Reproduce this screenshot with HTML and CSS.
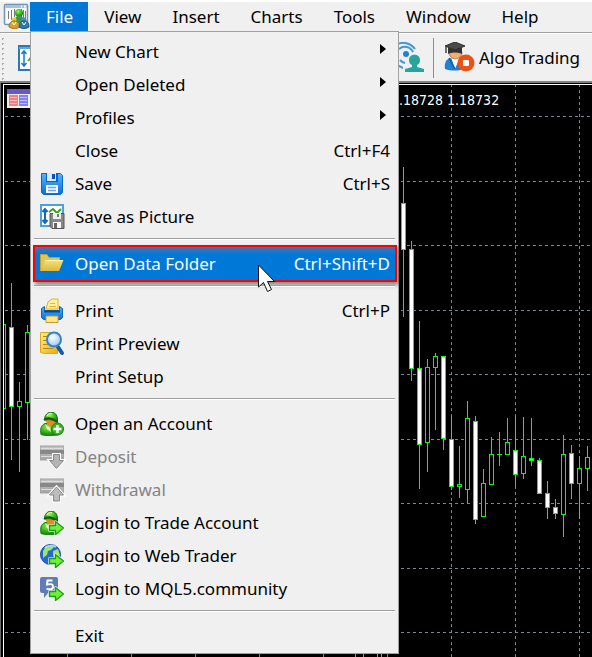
FILE: index.html
```html
<!DOCTYPE html>
<html lang="en">
<head>
<meta charset="utf-8">
<title>Trading terminal</title>
<link rel="stylesheet" href="styles.css">
</head>
<body>
<svg class="defs" aria-hidden="true">
  <defs>
    <linearGradient id="blue" x1="0" y1="0" x2="0" y2="1"><stop offset="0" stop-color="#58b4fa"/><stop offset="1" stop-color="#0870d8"/></linearGradient>
    <linearGradient id="gold" x1="0" y1="0" x2="1" y2="1"><stop offset="0" stop-color="#fff08a"/><stop offset="1" stop-color="#e8ac08"/></linearGradient>
    <linearGradient id="folder" x1="0" y1="0" x2="0" y2="1"><stop offset="0" stop-color="#f4e07c"/><stop offset="1" stop-color="#dcb840"/></linearGradient>
    <radialGradient id="green" cx=".4" cy=".3" r=".7"><stop offset="0" stop-color="#a0f050"/><stop offset=".55" stop-color="#3cb81c"/><stop offset="1" stop-color="#148010"/></radialGradient>
    <radialGradient id="lens" cx=".4" cy=".35" r=".7"><stop offset="0" stop-color="#ffffff"/><stop offset="1" stop-color="#8fc8f4"/></radialGradient>
    <linearGradient id="grey" x1="0" y1="0" x2="0" y2="1"><stop offset="0" stop-color="#c4c4c4"/><stop offset="1" stop-color="#a4a4a4"/></linearGradient>
    <symbol id="arrow" viewBox="0 0 24 24">
      <path d="M9.500 14.500h6v-4l8 6.500-8 6.500v-4h-6z" fill="#5fe02c" stroke="#fff" stroke-width="2.500" stroke-linejoin="round"/>
      <path d="M9.500 14.500h6v-4l8 6.500-8 6.500v-4h-6z" fill="#70f038" stroke="#18a010" stroke-width="1.400" stroke-linejoin="round"/>
    </symbol>
    <symbol id="person" viewBox="0 0 24 24">
      <path d="M1 22.500c-1-6 0-9 4-11h9c4 1 6 5 5 11-5 1.500-14 1.500-18 0z" fill="url(#green)" stroke="#178010"/>
      <path d="M5 8l3 5 4 2 4-4v-4z" fill="#e88820"/>
      <path d="M5 12l5 4 1 4-4-3z" fill="#e8f4d8"/>
      <path d="M4.500 8c0-10 13-11 13 0v3c-3-3-8-4-13-3z" fill="url(#green)" stroke="#106810"/>
      <path d="M4 8c4-3 9-2 13 2" stroke="#0c5c14" stroke-width="2" fill="none"/>
      <path d="M7 4c1-2 3-3 5-2" stroke="#c4f890" stroke-width="1.500" fill="none"/>
    </symbol>
    <symbol id="card" viewBox="0 0 24 24">
      <path d="M0 1h24v14h-24z" fill="url(#grey)" stroke="#a0a0a0"/>
      <path d="M0 5h24v4h-24z" fill="#888"/>
      <path d="M1 3.500h22M1 11.500h12" stroke="#ddd"/>
    </symbol>
  </defs>
</svg>

<header class="menubar">
  <svg class="app-icon" width="28" height="28" viewBox="0 0 28 28" aria-hidden="true">
    <rect x="2.500" y="2.500" width="23" height="20" rx="1" fill="#f8fbfd" stroke="#6f94b8" stroke-width="1.500"/>
    <path d="M3 3h22v3h-22z" fill="#a8c4dc"/><path d="M19 4.500h1M22 4.500h2" stroke="#fff" stroke-width="2"/>
    <path d="M6.500 9v8M9.500 8v10M12.500 7v8M19.500 7v8M21.500 8v9M23.500 9v10" stroke="#777"/>
    <circle cx="17" cy="11" r="4" fill="url(#green)"/><path d="M12 21c0-5 2-7 5-7s6 2 6 7z" fill="#389848"/>
    <circle cx="12" cy="18" r="2.500" fill="#f0c830"/><path d="M7 25c0-4 2-6 5-6s6 2 6 6c-4 2-7 2-11 0z" fill="#d8a420" stroke="#987018"/>
    <circle cx="22" cy="18" r="2.500" fill="#3c90c0"/><path d="M17 25c0-4 2-6 5-6 4 0 5 2 5 6-3 2-7 2-10 0z" fill="#2c78b0" stroke="#17567d"/>
    <path d="M10 20l2 3 2-3M20 20l2 3 2-3" stroke="#fff" fill="none"/>
  </svg>
  <nav class="menus" aria-label="Main">
    <button class="menu open" aria-expanded="true">File</button>
    <button class="menu">View</button>
    <button class="menu">Insert</button>
    <button class="menu">Charts</button>
    <button class="menu">Tools</button>
    <button class="menu">Window</button>
    <button class="menu">Help</button>
  </nav>
</header>

<div class="toolbar">
  <div class="tools-left">
    <span class="grip"></span>
    <svg width="26" height="26" viewBox="0 0 26 26" aria-hidden="true"><path d="M1 1h24v24h-24z" fill="#fff" stroke="#2a78b8" stroke-width="2"/><path d="M1 3h24" stroke="#60a8dc" stroke-width="2"/><path d="M6 6v15M3.500 9l2.500-3 2.500 3M3.500 18l2.500 3 2.500-3" stroke="#1878d0" stroke-width="1.500" fill="none"/><path d="M10 16l4-5 4 5 5-6" stroke="#42ac28" stroke-width="2" fill="none"/></svg>
  </div>
  <div class="tools-right">
    <svg width="32" height="32" viewBox="0 0 32 32" aria-hidden="true"><circle cx="13" cy="12" r="3" fill="#1c84d8"/><path d="M6 7a9 9 0 0 1 14 3M3 3a14 14 0 0 1 19 4M7 18a9 9 0 0 0 5 3M3 21a14 14 0 0 0 7 5" stroke="#3c98e0" stroke-width="2" fill="none"/><path d="M16 18c0-7 11-7 11 0 0 3-1 4-3 5v2l7 2v3h-19v-3l7-2v-2c-2-1-3-2-3-5z" fill="#28a49c"/></svg>
    <span class="divider"></span>
    <button class="algo">
      <svg width="31" height="31" viewBox="0 0 31 31" aria-hidden="true">
        <path d="M1 27c-1-6 1-10 6-11h8c5 1 6 6 5 11-6 2-13 2-19 0z" fill="#2080d4"/>
        <path d="M7 15l4 12 5-12z" fill="#fff"/><path d="M5 16l6 11" stroke="#105ca8" stroke-width="1.500"/>
        <path d="M5 10h13c0 9-13 9-13 0z" fill="#f2ad72" stroke="#c8763a"/>
        <path d="M4 6h14v6c-4-2-10-2-14 0z" fill="#333"/><path d="M1 4l10-4 10 4-10 4z" fill="#4a4a4a" stroke="#2c2c2c"/><path d="M2 5v6" stroke="#444" stroke-width="1.500"/>
        <circle cx="22" cy="21" r="8.500" fill="#ea5317"/><rect x="19" y="18" width="6" height="6" rx="1" fill="#fff"/>
      </svg>
      <span>Algo Trading</span>
    </button>
  </div>
</div>

<main class="chart">
  <svg class="plot" role="img" aria-label="Candlestick price chart">
    <g transform="translate(0 -83)">
      <g class="grid">
        <path d="M5 116.500H2000M5 181.500H2000M5 245.500H2000M5 310.500H2000M5 374.500H2000M5 439.500H2000M5 503.500H2000M5 568.500H2000M5 632.500H2000"/>
        <path d="M67.500 84V2000M131.500 84V2000M195.500 84V2000M259.500 84V2000M323.500 84V2000M387.500 84V2000M451.500 84V2000M515.500 84V2000M579.500 84V2000"/>
      </g>
      <path class="frame" d="M3.500 2000V84.500H2000"/>
      <path class="wick" d="M11.500 283V460M19.500 382V472M27.500 325V440M403.500 167V317M411.500 241V381M419.500 321V489M427.500 359V472M435.500 353V430M443.500 356V450M451.500 416V490M459.500 446V498M467.500 401V503M475.500 416V524M483.500 469V517M491.500 437V485M499.500 432V466M507.500 418V455M515.500 416V486M523.500 417V479M531.500 418V466M539.500 458V494M547.500 481V519M555.500 499V519M563.500 435V537M571.500 445V499M579.500 456V519M587.500 446V491M497 454.500H502"/>
      <path class="wick" d="M355.500 640V1000M363.500 640V1000M377.500 640V1000M381.500 640V1000"/>
      <path class="body rise" d="M4 324.500H5.500V408.500H4M17.500 401.500h4v5h-4zM25.500 332.500h4v70h-4zM425.500 367.500h4v75h-4zM433.500 356.500h4v11h-4zM457.500 484.500h4v2h-4zM465.500 418.500h4v71h-4zM481.500 483.500h4v33h-4zM489.500 454.500h4v30h-4zM505.500 442.500h4v12h-4zM521.500 456.500h4v17h-4zM561.500 454.500h4v60h-4zM577.500 468.500h4v15h-4zM585.500 457.500h4v11h-4z"/>
      <path class="body fall" d="M9.500 327.500h4v79h-4zM401.500 203.500h4v46h-4zM409.500 249.500h4v119h-4zM417.500 368.500h4v76h-4zM441.500 356.500h4v82h-4zM449.500 439.500h4v47h-4zM473.500 421.500h4v98h-4zM513.500 450.500h4v24h-4zM529.500 458.500h4v2h-4zM537.500 460.500h4v33h-4zM545.500 493.500h4v14h-4zM553.500 507.500h4v6h-4zM569.500 453.500h4v30h-4z"/>
      <g><path d="M7 89h26v19h-26z" fill="#eee"/><path d="M7 89h26v5h-26z" fill="#6658c8"/><path d="M9 95h9v11h-9z" fill="#f08080"/><path d="M19 95h9v11h-9z" fill="#8080f4"/><path d="M10 97.500h7M10 100.500h7M10 103.500h7M20 97.500h7M20 100.500h7M20 103.500h7" stroke="#ffffff88"/></g>
      <text class="quote" x="391" y="105">1.18728 1.18732</text>
    </g>
  </svg>
</main>

<div class="dropdown" role="menu" aria-label="File">
  <button class="item"><span class="icon"></span><span>New Chart</span><span class="more"></span></button>
  <button class="item"><span class="icon"></span><span>Open Deleted</span><span class="more"></span></button>
  <button class="item"><span class="icon"></span><span>Profiles</span><span class="more"></span></button>
  <button class="item"><span class="icon"></span><span>Close</span><kbd>Ctrl+F4</kbd></button>
  <button class="item">
    <svg class="icon" viewBox="0 0 24 24"><path d="M1.500 1.500h19l2 2v17l-2 2h-17l-2-2z" fill="url(#blue)" stroke="#0868c8"/><path d="M6 1h12v9h-12z" fill="#0c64c4"/><path d="M7 1h9v8h-9z" fill="#d8e8f8"/><path d="M12 2h3v5h-3z" fill="#0854b0"/><path d="M6 13h12v8h-12z" fill="#f4faff"/><path d="M8 15.500h8M8 18.500h8" stroke="#70a8dc" stroke-width="1.500"/></svg>
    <span>Save</span><kbd>Ctrl+S</kbd></button>
  <button class="item">
    <svg class="icon" viewBox="0 0 24 24"><path d="M1 0h22v21h-22z" fill="#fff" stroke="#4aa0e4" stroke-width="2"/><path d="M5 4v13M2.500 7l2.500-3 2.500 3M2.500 15l2.500 3 2.500-3" stroke="#1868b8" stroke-width="2" fill="none"/><path d="M9 7l4-3 4 4 4-4" stroke="#38a020" stroke-width="2" fill="none"/><path d="M10 8.500h14v15h-12l-2-2z" fill="#888" stroke="#555"/><path d="M13 8h8v6h-8z" fill="#eee"/><path d="M17 9h2v3h-2z" fill="#777"/><path d="M13 17h8v6h-8z" fill="#f8f8f8"/><path d="M14 18h3v5h-3z" fill="#666"/></svg>
    <span>Save as Picture</span></button>
  <hr>
  <div class="callout">
  <button class="item selected">
    <svg class="icon" viewBox="0 0 24 24"><path d="M0 19v-17h7l2 3h11v3h3l-4 11z" fill="#c89c28"/><path d="M1 3h6l2 3h10v3h-14l-4 9z" fill="#e0c454"/><path d="M5 8h18.500l-4.500 11h-18.500z" fill="url(#folder)"/><path d="M5.500 8.500h17" stroke="#fff4a8"/></svg>
    <span>Open Data Folder</span><kbd>Ctrl+Shift+D</kbd></button>
  </div>
  <hr>
  <button class="item">
    <svg class="icon" viewBox="0 0 24 24"><path d="M6 10l2-7 4-3h6v10z" fill="#fff3a0" stroke="#e8b020"/><path d="M10 4.500h5M9 7.500h7" stroke="#e8b830"/><path d="M1.500 9.500l3-2v4h15v-4l3 2v9l-2 2h-17l-2-2z" fill="url(#blue)" stroke="#0868c0"/><path d="M4 12.500h16" stroke="#074888" stroke-width="2"/><path d="M6 17h12v6.500h-12z" fill="#ffe88c" stroke="#c09838"/></svg>
    <span>Print</span><kbd>Ctrl+P</kbd></button>
  <button class="item">
    <svg class="icon" viewBox="0 0 24 24"><path d="M.5.500h17v21h-13l-4-1z" fill="url(#gold)" stroke="#dca818"/><path d="M3 4.500h5M3 8.500h4M3 12.500h5M3 16.500h10" stroke="#b88818"/><path d="M18 15l4 6" stroke="#1858a8" stroke-width="4" stroke-linecap="round"/><circle cx="14" cy="7.500" r="7" fill="url(#lens)" stroke="#3880cc" stroke-width="2"/></svg>
    <span>Print Preview</span></button>
  <button class="item"><span class="icon"></span><span>Print Setup</span></button>
  <hr>
  <button class="item">
    <svg class="icon" viewBox="0 0 24 24"><use href="#person"/><circle cx="17.500" cy="17" r="6" fill="#38b81c" stroke="#188010"/><path d="M13.500 17h8M17.500 13v8" stroke="#fff" stroke-width="2.500"/></svg>
    <span>Open an Account</span></button>
  <button class="item" disabled>
    <svg class="icon" viewBox="0 0 24 24"><use href="#card"/><path d="M13.500 9.500h6v6h4l-7 8-7-8h4z" fill="#aaa" stroke="#fff" stroke-width="3"/><path d="M13.500 9.500h6v6h4l-7 8-7-8h4z" fill="#b4b4b4" stroke="#888"/></svg>
    <span>Deposit</span></button>
  <button class="item" disabled>
    <svg class="icon" viewBox="0 0 24 24"><use href="#card"/><path d="M16.500 9l7 8h-4v6h-6v-6h-4z" fill="#aaa" stroke="#fff" stroke-width="3"/><path d="M16.500 9l7 8h-4v6h-6v-6h-4z" fill="#bcbcbc" stroke="#888"/></svg>
    <span>Withdrawal</span></button>
  <button class="item">
    <svg class="icon" viewBox="0 0 24 24"><use href="#person"/><use href="#arrow"/></svg>
    <span>Login to Trade Account</span></button>
  <button class="item">
    <svg class="icon" viewBox="0 0 24 24"><circle cx="10.500" cy="10.500" r="10" fill="#2468dc" stroke="#1848a0"/><path d="M3 7c3-6 8-6 11-4l-3 3-3 1-1 4-4 3zM13 7l5-2 2 6-4 4-3-3z" fill="#a0e460"/><path d="M5 4c3-3 8-3 11-1" stroke="#a0dcff" stroke-width="2" fill="none"/><use href="#arrow"/></svg>
    <span>Login to Web Trader</span></button>
  <button class="item">
    <svg class="icon" viewBox="0 0 24 24"><path d="M2 0h14q2 0 2 2v12q0 2-2 2h-8l-4 5v-5h-2q-2 0-2-2v-12q0-2 2-2z" fill="#5c7eb4"/><path d="M12.500 3.500h-5l-.5 4c5-1 6 0 6 2.500s-4 3-6.500 1.500" fill="none" stroke="#fff" stroke-width="2"/><use href="#arrow"/></svg>
    <span>Login to MQL5.community</span></button>
  <hr>
  <button class="item"><span class="icon"></span><span>Exit</span></button>
</div>
<svg class="pointer" width="20" height="30" viewBox="0 0 20 30" aria-hidden="true"><path d="M1.500 1v22l5-4.500 4 9 4-2-4-8h7z" fill="#fff" stroke="#111"/></svg>
</body>
</html>
```
FILE: styles.css
```css
* { box-sizing: border-box; }

body {
  position: relative;
  display: flex;
  flex-direction: column;
  min-height: 100vh;
  margin: 0;
  overflow: hidden;
  background: #f0f0f0;
  color: #000;
  font: 17px/29px "Noto Sans", "Open Sans", sans-serif;
}

button {
  margin: 0;
  padding: 0;
  border: 0;
  background: none;
  color: inherit;
  font: inherit;
  text-align: left;
  white-space: nowrap;
}

svg { flex: none; }
.defs { position: absolute; width: 0; height: 0; }

.menubar {
  display: flex;
  border-top: 2px solid #fff;
  border-bottom: 1px solid #a0a0a0;
  height: 33px;
}
.app-icon { margin-left: 2px; }
.menus { display: flex; height: 29px; }
.menu { padding: 0 15px 0 16px; }
.menu.open { background: #0078d7; color: #fff; }

.toolbar {
  display: flex;
  justify-content: space-between;
  height: 50px;
  border-top: 1px solid #fff;
  border-bottom: 2px solid #808080;
}
.tools-left, .tools-right, .algo { display: flex; align-items: center; }
.tools-left { gap: 11px; }
.tools-right { gap: 8px; padding-right: 12px; }
.algo { gap: 4px; }
.tools-right .divider { margin-right: 2px; }
.grip {
  width: 7px;
  height: 44px;
  background: radial-gradient(circle, #aaa 1px, transparent 1px) 0 0 / 5px 5px;
}
.divider { width: 1px; height: 40px; background: #8c8c8c; }

.chart {
  display: flex;
  flex: 1;
  border-left: 1px solid #696969;
  background: #000;
}
.plot { flex: 1; width: 100%; margin-left: -1px; shape-rendering: crispEdges; }
.grid { stroke: #778899; stroke-dasharray: 3 3; fill: none; }
.frame { stroke: #fff; fill: none; }
.wick, .body { stroke: #0f0; fill: none; }
.body.rise { fill: #000; }
.body.fall { fill: #fff; }
.quote { fill: #fff; font: 14px "DejaVu Sans Condensed", sans-serif; }

.dropdown {
  position: absolute;
  top: 31px;
  left: 30px;
  width: 369px;
  padding: 3px 3px 1px;
  border: 1px solid #a0a0a0;
  background: #f0f0f0;
}
.item {
  display: flex;
  align-items: center;
  gap: 11px;
  width: 100%;
  height: 33px;
  padding: 0 5px 0 6px;
}
.item:disabled { color: #838383; }
.icon { width: 24px; height: 24px; overflow: visible; }
.item kbd { margin-left: auto; font: inherit; }
.more {
  margin: 0 4px 6px auto;
  border: 5px solid transparent;
  border-left: 6px solid #000;
  border-right: 0;
}
.dropdown hr {
  height: 2px;
  margin: 5px 0 7px;
  border: 0;
  border-top: 1px solid #a0a0a0;
  background: #fff;
}
.callout {
  margin: -2px -2px -2px -1px;
  border: 2px solid red;
  box-shadow: 2px 3px 4px #00000070;
}
.item.selected {
  padding: 0 5px;
  background: linear-gradient(#4472b4, #0078d7 8px);
  color: #fff;
}
.pointer { position: absolute; top: 264px; left: 257px; }
```
